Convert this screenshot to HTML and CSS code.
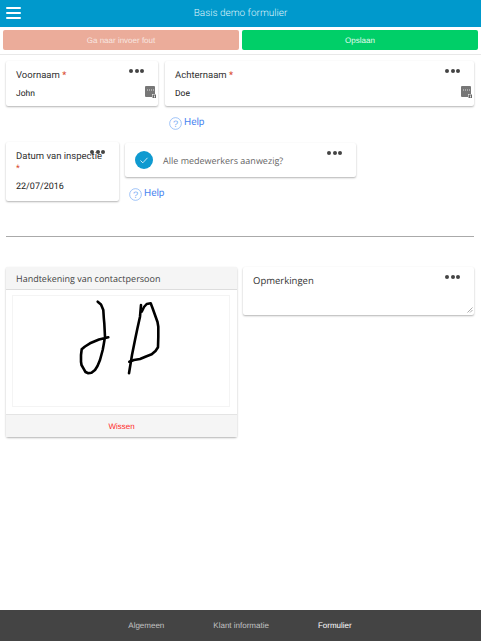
FILE: index.html
```html
<!DOCTYPE html>
<html lang="en">
<head>
    <meta charset="UTF-8">
    <meta name="viewport" content="width=device-width, initial-scale=1.0">
    <title>Basis demo formulier</title>
    <link rel="stylesheet" href="styles.css">
</head>
<body>

    <!-- Top bar -->
    <header class="topbar">
        <div class="hamburger"><span></span><span></span><span></span></div>
        <div class="topbar-title">Basis demo formulier</div>
    </header>

    <div class="actions">
        <button class="btn btn-error">Ga naar invoer fout</button>
        <button class="btn btn-save">Opslaan</button>
    </div>

    <main class="form">
        <!-- Row 1: name -->
        <div class="row-names">
            <div class="field">
                <div class="card card-text">
                    <div class="dots"><i></i><i></i><i></i></div>
                    <div class="label">Voornaam <span class="req">*</span></div>
                    <div class="value">John</div>
                    <svg class="field-icon" viewBox="0 0 11 12">
                        <path d="M0 1a1 1 0 0 1 1-1h8a1 1 0 0 1 1 1v7H7v3H1a1 1 0 0 1-1-1z" fill="#777"/>
                        <path d="M2 3.5h1v1H2zM4 3.5h1v1H4zM6 3.5h1v1H6zM8 3.5h1v1H8z" fill="#ddd"/>
                        <path d="M7.5 8.5H11V12H7.5z" fill="#666"/>
                        <path d="M9 9.5h1v2H9z" fill="#ddd"/>
                    </svg>
                </div>
            </div>
            <div class="field">
                <div class="card card-text">
                    <div class="dots"><i></i><i></i><i></i></div>
                    <div class="label">Achternaam <span class="req">*</span></div>
                    <div class="value">Doe</div>
                    <svg class="field-icon" viewBox="0 0 11 12">
                        <path d="M0 1a1 1 0 0 1 1-1h8a1 1 0 0 1 1 1v7H7v3H1a1 1 0 0 1-1-1z" fill="#777"/>
                        <path d="M2 3.5h1v1H2zM4 3.5h1v1H4zM6 3.5h1v1H6zM8 3.5h1v1H8z" fill="#ddd"/>
                        <path d="M7.5 8.5H11V12H7.5z" fill="#666"/>
                        <path d="M9 9.5h1v2H9z" fill="#ddd"/>
                    </svg>
                </div>
                <a class="help">
                    <svg viewBox="0 0 14 14"><circle cx="7" cy="7" r="6.3" fill="none" stroke="#7fb0f5" stroke-width="0.8"/><text x="7" y="10.4" text-anchor="middle" class="help-mark">?</text></svg>
                    Help
                </a>
            </div>
        </div>

        <!-- Row 2: date and checkbox -->
        <div class="row-inspect">
            <div class="card card-date">
                <div class="dots"><i></i><i></i><i></i></div>
                <div class="label">Datum van inspectie <span class="req req-block">*</span></div>
                <div class="value">22/07/2016</div>
            </div>
            <div class="field">
                <div class="card card-check">
                    <div class="dots"><i></i><i></i><i></i></div>
                    <span class="check">
                        <svg viewBox="0 0 18 18"><path d="M5.5 9.5l2.3 2.3 4.7-5" fill="none" stroke="#fff" stroke-width="0.8"/></svg>
                    </span>
                    <span class="check-label">Alle medewerkers aanwezig?</span>
                </div>
                <a class="help">
                    <svg viewBox="0 0 14 14"><circle cx="7" cy="7" r="6.3" fill="none" stroke="#7fb0f5" stroke-width="0.8"/><text x="7" y="10.4" text-anchor="middle" class="help-mark">?</text></svg>
                    Help
                </a>
            </div>
        </div>

        <hr class="divider">

        <!-- Row 3: signature and remarks -->
        <div class="row-sign">
            <div class="card card-sign">
                <div class="sign-head">Handtekening van contactpersoon</div>
                <div class="sign-body">
                    <svg class="sign-pad" viewBox="12 295 218 112">
                        <path d="M97.7 301.7L101 304.5L103.3 310L103.8 318L104.3 323.3L105 336.7L103.8 344L102.7 350L100 360L97.5 366L95 370L91.5 372.8L88.3 373.3L85.5 372L84 369.3L81.5 365L81 361.7L81 355L81.7 349.3L85 346.5L90 343.3L99 339.5L108.3 337.3"/>
                        <path d="M141 305L140 316.7L137.5 328L135 340L132 355L129 373.3"/>
                        <path d="M141.7 311.7L144 307L146.7 304L150.7 303.3L152.5 308L155 315L157.5 322L158.3 326.7L158.3 337L158 347.3L155.5 351L151.7 354.3L146 356.5L140 359L134 360L129.3 361.7"/>
                    </svg>
                </div>
                <div class="sign-foot">Wissen</div>
            </div>
            <div class="card card-notes">
                <div class="dots"><i></i><i></i><i></i></div>
                <div class="label">Opmerkingen</div>
                <svg class="resize" viewBox="0 0 6 6"><path d="M0.5 5.5L5.5 0.5M3 5.5L5.5 3" stroke="#888" stroke-width="0.7" fill="none"/></svg>
            </div>
        </div>
    </main>

    <!-- Bottom tabs -->
    <footer class="tabs">
        <span class="tab">Algemeen</span>
        <span class="tab">Klant informatie</span>
        <span class="tab tab-active">Formulier</span>
    </footer>

</body>
</html>
```

FILE: styles.css
```css
html, body { height: 100%; }

body {
    margin: 0;
    height: 641px;
    overflow: hidden;
    display: flex;
    flex-direction: column;
    background: #fff;
    font-family: 'Roboto', 'Liberation Sans', sans-serif;
    color: #333;
    text-rendering: geometricPrecision;
}

.topbar {
    flex: none;
    height: 27px;
    background: #0099cc;
    display: flex;
    align-items: center;
    justify-content: center;
    position: relative;
}

.hamburger {
    position: absolute;
    left: 6px;
    top: 7px;
    width: 15px;
    display: flex;
    flex-direction: column;
    gap: 3px;
}

.hamburger span {
    height: 2px;
    background: #fff;
    border-radius: 1px;
}

.topbar-title {
    color: #dff3fa;
    font-size: 10px;
    font-weight: 300;
}

.actions {
    flex: none;
    display: flex;
    gap: 3px;
    padding: 3px 3px 4px;
    border-bottom: 1px solid #e8e8e8;
}

.btn {
    flex: 1;
    height: 20px;
    padding: 0;
    border: none;
    border-radius: 2px;
    color: #fff;
    font-family: 'Liberation Sans', Arial, sans-serif;
    font-size: 8px;
    text-rendering: geometricPrecision;
}

.btn-error { background: #ebac9a; color: #f8e6e0; }
.btn-save { background: #00cf68; color: #e4fbef; }

.form {
    flex: 1;
    padding: 6px 7px 0 6px;
}

.card {
    position: relative;
    background: #fff;
    border-radius: 2px;
    box-shadow: 0 1px 2px rgba(0,0,0,0.3);
    box-sizing: border-box;
}

.dots {
    position: absolute;
    top: 8px;
    right: 14px;
    display: flex;
    gap: 1.5px;
}

.dots i {
    width: 4px;
    height: 4px;
    border-radius: 50%;
    background: #444;
}

.label {
    font-size: 9.5px;
    font-weight: 400;
    color: #333;
}

.req { color: #d9472b; }
.req-block { display: block; font-size: 9px; line-height: 12px; margin-top: 1px; }

.value {
    font-size: 8.5px;
    color: #222;
}

.row-names {
    display: grid;
    grid-template-columns: 152px 309px;
    gap: 7px;
}

.card-text {
    height: 45px;
    padding: 9px 10px 0;
}

.card-text .value { margin-top: 8px; }

.field-icon {
    position: absolute;
    right: 2px;
    bottom: 8px;
    width: 11px;
    height: 12px;
}

.help {
    display: flex;
    align-items: center;
    gap: 2px;
    margin: 10px 0 0 4px;
    color: #4a86f0;
    font-size: 10px;
    line-height: 14px;
}

.help svg { width: 13px; height: 13px; }

.help-mark {
    font-size: 10px;
    fill: #7fb0f5;
    font-family: 'Liberation Sans', sans-serif;
}

.row-inspect {
    display: grid;
    grid-template-columns: 113px 231px;
    gap: 6px;
    margin-top: 12px;
    align-items: start;
}

.card-date {
    height: 59px;
    padding: 9px 10px 0;
}

.card-date .value {
    margin-top: 7px;
    font-size: 9px;
}

.card-check {
    height: 34px;
    margin-top: 1px;
    padding-left: 10px;
    display: flex;
    align-items: center;
    gap: 10px;
}

.check {
    width: 18px;
    height: 18px;
    border-radius: 50%;
    background: #0f9ad0;
    flex: none;
}

.check svg { display: block; }

.check-label {
    font-family: 'Open Sans', sans-serif;
    font-size: 9px;
    color: #666;
}

.divider {
    margin: 35px 0 30px;
    border: none;
    border-top: 1px solid #aaa;
}

.row-sign {
    display: grid;
    grid-template-columns: 231px 231px;
    gap: 6px;
    align-items: start;
}

.card-sign {
    height: 170px;
    display: flex;
    flex-direction: column;
}

.sign-head {
    height: 23px;
    line-height: 23px;
    padding-left: 10px;
    background: #f5f5f5;
    border-bottom: 1px solid #ddd;
    font-family: 'Open Sans', sans-serif;
    font-size: 9px;
    color: #444;
    box-sizing: border-box;
}

.sign-body {
    flex: 1;
    padding: 5px 7px 0 6px;
}

.sign-pad {
    display: block;
    width: 218px;
    height: 112px;
    box-sizing: border-box;
    outline: 1px solid #f4f4f4;
    outline-offset: -1px;
}

.sign-pad path {
    fill: none;
    stroke: #000;
    stroke-width: 2.6;
    stroke-linejoin: round;
    stroke-linecap: round;
}

.sign-foot {
    height: 23px;
    line-height: 23px;
    background: #f5f5f5;
    border-top: 1px solid #e4e4e4;
    box-sizing: border-box;
    text-align: center;
    color: #ff2a2a;
    font-size: 8px;
    font-family: 'Liberation Sans', sans-serif;
}

.card-notes {
    height: 48px;
    padding: 7px 10px;
}

.card-notes .label {
    font-family: 'Open Sans', sans-serif;
    font-size: 9.5px;
}

.resize {
    position: absolute;
    right: 1px;
    bottom: 2px;
    width: 6px;
    height: 6px;
}

.tabs {
    flex: none;
    height: 31px;
    background: #444;
    display: flex;
    align-items: center;
    justify-content: center;
    gap: 49px;
    padding-right: 1px;
    font-family: 'Liberation Sans', sans-serif;
    font-size: 8px;
}

.tab { color: #c2c2c2; }
.tab-active { color: #fff; }
```
